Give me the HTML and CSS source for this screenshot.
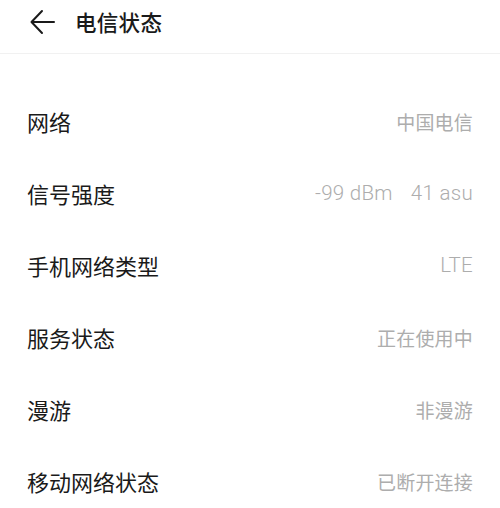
FILE: index.html
```html
<!DOCTYPE html>
<html lang="zh-CN">

<head>
    <meta charset="UTF-8">
    <meta name="viewport" content="width=device-width, initial-scale=1.0">
    <title>电信状态</title>
    <link rel="stylesheet" href="styles.css">
</head>

<body>
    <div class="top-bar">
        <button class="back-btn" aria-label="返回">
            <svg width="26" height="26" viewBox="0 0 26 26" fill="none" stroke="#1a1a1a" stroke-width="2" stroke-linecap="round" stroke-linejoin="round">
                <path d="M24 13H2" />
                <path d="M12 2L1.5 13L12 24" />
            </svg>
        </button>
        <h1 class="title">电信状态</h1>
    </div>

    <ul class="status-list">
        <li class="row">
            <span class="label">网络</span>
            <span class="value">中国电信</span>
        </li>
        <li class="row">
            <span class="label">信号强度</span>
            <span class="value num"><span>-99 dBm</span><span class="gap">41 asu</span></span>
        </li>
        <li class="row">
            <span class="label">手机网络类型</span>
            <span class="value num">LTE</span>
        </li>
        <li class="row">
            <span class="label">服务状态</span>
            <span class="value">正在使用中</span>
        </li>
        <li class="row">
            <span class="label">漫游</span>
            <span class="value">非漫游</span>
        </li>
        <li class="row">
            <span class="label">移动网络状态</span>
            <span class="value">已断开连接</span>
        </li>
    </ul>
</body>

</html>
```

FILE: styles.css
```css
body {
    font-family: Roboto, "Noto Sans CJK SC", sans-serif;
    background-color: #ffffff;
    color: #1a1a1a;
    margin: 0;
    padding: 0;
    overflow: hidden;
}

.top-bar {
    display: flex;
    align-items: center;
    height: 54px;
    padding: 0 0 0 30px;
    border-bottom: 1px solid #f1f1f1;
    box-sizing: border-box;
}

.back-btn {
    display: flex;
    align-items: center;
    padding: 0;
    border: none;
    background: none;
    margin-top: -10px;
    width: 26px;
    height: 26px;
}

.title {
    margin: -10px 0 0 19px;
    font-size: 21.5px;
    font-weight: 500;
    letter-spacing: 0.3px;
}

.status-list {
    list-style: none;
    margin: 0;
    padding: 31px 27px 0 27px;
}

.row {
    display: flex;
    justify-content: space-between;
    align-items: center;
    height: 72px;
}

.label {
    font-size: 22px;
}

.value {
    font-size: 19px;
    color: #adadad;
    letter-spacing: 0.2px;
}

.num {
    font-size: 20.5px;
    font-weight: 300;
    letter-spacing: 0.3px;
}

.gap {
    margin-left: 18px;
}
```
